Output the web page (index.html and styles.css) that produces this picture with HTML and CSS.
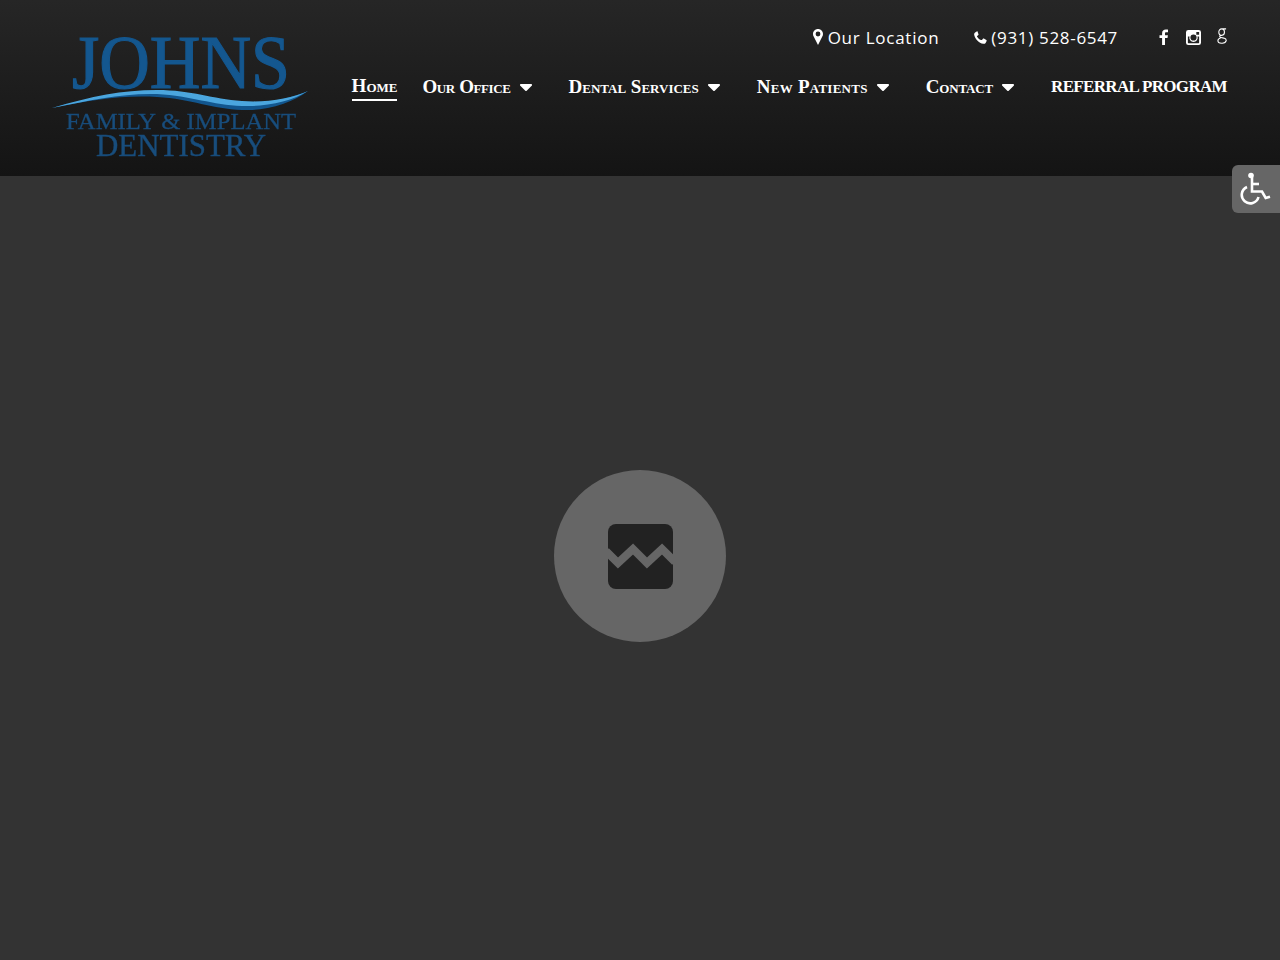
FILE: index.html
```html
<!DOCTYPE html>
<html lang="en">
<head>
<meta charset="utf-8">
<title>Johns Family &amp; Implant Dentistry</title>
<link rel="stylesheet" href="styles.css">
</head>
<body>
<header class="site-header">
  <a class="logo" href="#" aria-label="Johns Family &amp; Implant Dentistry">
    <svg class="logo-svg" viewBox="0 -10 258 146" width="258" height="146">
      <text class="logo-main" x="20" y="54" textLength="218" lengthAdjust="spacingAndGlyphs">JOHNS</text>
      <path class="swoosh-dark" d="M0 74C40 63 70 58 105 59C140 60 160 68 190 69C215 70 240 64 256 57C240 69 215 77 190 76C160 75 140 65 105 63C70 61 40 66 0 74Z"/>
      <path class="swoosh-light" d="M0 74C40 62 70 56 105 56C140 56 160 65 190 67C215 69 240 64 256 57C240 67 215 73 190 72C160 71 140 62 105 60C70 59 40 66 0 74Z"/>
      <text class="logo-sub" x="14" y="95" textLength="230" lengthAdjust="spacingAndGlyphs">FAMILY &amp; IMPLANT</text>
      <text class="logo-sub2" x="44" y="122" textLength="170" lengthAdjust="spacingAndGlyphs">DENTISTRY</text>
    </svg>
  </a>
  <div class="header-right">
    <div class="top-bar">
      <a class="top-link" href="#">
        <svg class="top-icon pin" viewBox="0 0 10 16"><path fill-rule="evenodd" d="M5 0C2.200 0 0 2.200 0 5c0 1.100.3 1.800.7 2.600L5 16l4.300-8.400C9.700 6.800 10 6.100 10 5c0-2.800-2.200-5-5-5Zm0 2.600a2.400 2.400 0 1 1 0 4.800 2.400 2.400 0 0 1 0-4.800Z"/></svg>
        Our Location
      </a>
      <a class="top-link phone-link" href="#">
        <svg class="top-icon phone" viewBox="0 0 14 14"><path d="M3.300.4 1.200 1.500C.4 2 0 3 .2 4c.7 4.500 5.100 9 9.800 9.800 1 .2 2-.2 2.500-1l1.100-2.100c.2-.4.100-.8-.3-1l-2.700-1.500c-.4-.2-.7-.1-1 .2l-1 1.200c-.2.200-.4.200-.7.100C6.400 9.800 4.200 7.600 3.300 6.100c-.2-.3-.1-.5.100-.7l1.200-1c.3-.3.4-.6.200-1L3.900.7C3.700.3 3.500.3 3.300.4Z"/></svg>
        (931) 528-6547
      </a>
      <div class="socials">
        <a class="social" href="#" aria-label="Facebook"><svg class="fb" viewBox="0 0 9 16"><path d="M6 16V9h2.500l.4-2.800H6V4.500c0-.8.2-1.300 1.400-1.300H9V.7C8.700.7 7.800.6 6.800.6 4.600.6 3.100 1.900 3.100 4.300v1.900H.5V9h2.600v7Z"/></svg></a>
        <a class="social" href="#" aria-label="Instagram"><svg class="ig" viewBox="0 0 16 16"><path fill-rule="evenodd" d="M2.500 0h11A2.500 2.500 0 0 1 16 2.500v11a2.500 2.500 0 0 1-2.500 2.500h-11A2.500 2.500 0 0 1 0 13.500v-11A2.500 2.500 0 0 1 2.500 0ZM11 2v3h3V2ZM8 4.700a3.300 3.300 0 1 0 0 6.600 3.300 3.300 0 0 0 0-6.600ZM2 7v6.500c0 .3.200.5.500.5h11c.3 0 .5-.2.500-.5V7h-1.700a4.500 4.500 0 1 1-8.600 0Z"/></svg></a>
        <a class="social" href="#" aria-label="Google"><svg class="gg" viewBox="0 0 11 18"><path d="M5.200 1.200C3.200 1.200 2 2.700 2 4.600c0 2 1.300 3.700 3.200 3.700 1.900 0 3-1.400 3-3.300 0-2-1.200-3.800-3-3.800ZM5.200 1.200H10M3.800 8.300C2.500 9.200 2.800 10.400 4.400 10.700L7.500 11.300C9.600 11.800 10.400 12.700 10.100 14.200 9.700 16 7.600 17.200 5 17 2.500 16.800 1 15.600 1 14.100 1 12.800 2.300 11.600 4 11.200"/></svg></a>
      </div>
    </div>
    <nav class="main-nav">
      <a class="nav-item active" href="#">Home</a>
      <a class="nav-item office" href="#">Our Office<svg class="caret" viewBox="0 0 12 7"><path d="M1 0h10c.9 0 1.300 1 .7 1.700l-5 5c-.4.4-1 .4-1.400 0l-5-5C-.3 1 .1 0 1 0Z"/></svg></a>
      <a class="nav-item dental" href="#">Dental Services<svg class="caret" viewBox="0 0 12 7"><path d="M1 0h10c.9 0 1.300 1 .7 1.700l-5 5c-.4.4-1 .4-1.400 0l-5-5C-.3 1 .1 0 1 0Z"/></svg></a>
      <a class="nav-item patients" href="#">New Patients<svg class="caret" viewBox="0 0 12 7"><path d="M1 0h10c.9 0 1.300 1 .7 1.700l-5 5c-.4.4-1 .4-1.400 0l-5-5C-.3 1 .1 0 1 0Z"/></svg></a>
      <a class="nav-item contact" href="#">Contact<svg class="caret" viewBox="0 0 12 7"><path d="M1 0h10c.9 0 1.300 1 .7 1.700l-5 5c-.4.4-1 .4-1.400 0l-5-5C-.3 1 .1 0 1 0Z"/></svg></a>
      <a class="nav-item referral" href="#">REFERRAL PROGRAM</a>
    </nav>
  </div>
</header>
<main class="hero">
  <div class="placeholder">
    <svg viewBox="0 0 65 65" width="65" height="65" aria-hidden="true">
      <rect class="ph-tile" x="0" y="0" width="65" height="65" rx="8"/>
      <path class="ph-zig" d="M-2 27 10 39 25 25 39 39 54 25 67 38"/>
    </svg>
  </div>
</main>
<button class="a11y" aria-label="Accessibility">
  <svg viewBox="0 0 32 34" width="32" height="34">
    <circle class="a11y-dot" cx="11" cy="3.500" r="2.800"/>
    <path class="a11y-line" d="M12 5v14.500h10l3.700 6.500 4.300-1.300"/>
    <path class="a11y-line" d="M12 12h7"/>
    <path class="a11y-line" d="M7 15A8.500 8.500 0 1 0 18.500 25"/>
  </svg>
</button>
</body>
</html>
```
FILE: styles.css
```css
* { box-sizing: border-box; }
html, body { margin: 0; height: 100%; }
body {
  display: flex;
  flex-direction: column;
  min-height: 960px;
  background: #333;
  color: #fff;
  font-family: "Open Sans", sans-serif;
  overflow: hidden;
}
a { color: inherit; text-decoration: none; }

.site-header {
  flex: 0 0 176px;
  display: flex;
  justify-content: space-between;
  padding: 24px 53px 0 52px;
  background: linear-gradient(#262626, #141414);
}
.logo { flex: none; }
.logo-svg { display: block; filter: blur(.35px); }
.logo-main { font: 400 77px "Liberation Serif", serif; fill: #14578f; stroke: #14578f; stroke-width: 1.200; }
.logo-sub { font: 400 24px "Liberation Serif", serif; fill: #184d7c; stroke: #184d7c; stroke-width: .3; }
.logo-sub2 { font: 400 32px "Liberation Serif", serif; fill: #184d7c; stroke: #184d7c; stroke-width: .4; }
.swoosh-dark { fill: #12568e; }
.swoosh-light { fill: #4ba6de; }

.header-right {
  display: flex;
  flex-direction: column;
  align-items: flex-end;
}
.top-bar {
  display: flex;
  align-items: center;
  height: 26px;
  font-size: 17px;
  letter-spacing: .75px;
  font-weight: 500;
}
.top-link { display: flex; align-items: center; gap: 5px; margin-right: 35px; }
.phone-link { gap: 4px; margin-right: 41px; letter-spacing: .68px; }
.top-icon { fill: #fff; display: block; }
.pin { width: 10px; height: 16px; }
.phone { width: 13px; height: 13px; }
.socials { display: flex; align-items: center; }
.social { display: block; }
.social svg { display: block; fill: #fff; }
.fb { width: 9px; height: 16px; margin-right: 18px; }
.ig { width: 15px; height: 15px; margin-right: 16px; }
.social .gg { width: 10px; height: 18px; fill: none; stroke: #fff; stroke-width: 1.200; margin-top: -2px; }

.main-nav {
  display: flex;
  align-items: flex-start;
  margin-top: 25px;
  font: 700 19px/24px "Liberation Serif", serif;
  font-variant: small-caps;
}
.nav-item { display: flex; align-items: center; height: 27px; padding-bottom: 3px; margin-right: 37px; white-space: nowrap; }
.nav-item.active {
  margin-right: 25px;
  border-bottom: 2px solid #fff;
  height: 26px;
  padding-bottom: 2px;
}
.office { letter-spacing: -.4px; }
.patients { letter-spacing: .25px; }
.contact { letter-spacing: -.14px; }
.nav-item.referral { margin-right: 0; font-variant: normal; font-size: 17px; letter-spacing: -.66px; }
.caret {
  display: block;
  width: 12px;
  height: 7px;
  margin-left: 9px;
  fill: #fff;
}

.hero {
  flex: 1;
  display: flex;
  align-items: center;
  justify-content: center;
  padding-bottom: 24px;
}
.placeholder {
  width: 172px;
  height: 172px;
  padding: 1px 0 0 1px;
  border-radius: 50%;
  background: #666;
  display: flex;
  align-items: center;
  justify-content: center;
}
.placeholder svg { display: block; overflow: hidden; }
.ph-tile { fill: #222; }
.ph-zig { fill: none; stroke: #666; stroke-width: 8; }

.a11y {
  position: fixed;
  top: 165px;
  right: 0;
  width: 48px;
  height: 48px;
  padding: 7px 8px;
  border: 0;
  border-radius: 6px 0 0 6px;
  background: #666;
  display: block;
}
.a11y svg { display: block; }
.a11y-dot { fill: #fff; }
.a11y-line { fill: none; stroke: #fff; stroke-width: 2.600; }
```
